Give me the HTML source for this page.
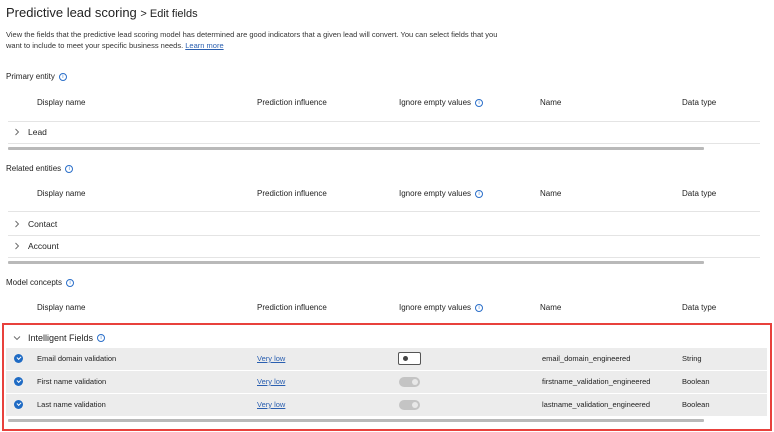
<!DOCTYPE html>
<html><head><style>
body{margin:0;width:774px;height:432px;background:#fff;font-family:"Liberation Sans",sans-serif;color:#222;position:relative;overflow:hidden}
.a{position:absolute;white-space:nowrap;line-height:10px}
.s{font-size:7.5px}
.h{font-size:8px}
.i{position:relative;display:inline-block;width:6px;height:6px;border:1px solid #2b6fc9;border-radius:50%;top:0px;margin-left:4px;font-size:5px;color:#2b6fc9;text-align:center;line-height:6px;vertical-align:top;margin-top:1px}
.ln{position:absolute;left:8px;width:752px;height:1px;background:#e4e4e4}
.sb{position:absolute;left:8px;width:696px;height:3px;background:#b9b9b9;border-radius:1px}
.row{position:absolute;left:6px;width:761px;height:22px;background:#ececec;border-bottom:1px solid #fff}
.ck{position:absolute;left:8px;top:6px;width:9px;height:9px;border-radius:50%;background:#1f6bc4}
.ck:after{content:"";position:absolute;left:2.5px;top:2px;width:3px;height:2px;border-left:1.3px solid #fff;border-bottom:1.3px solid #fff;transform:rotate(-45deg)}
.tg{position:absolute;left:393px;top:6px;width:21px;height:10px;border-radius:5px;background:#c4c4c4}
.tg:after{content:"";position:absolute;right:2px;top:2px;width:6px;height:6px;border-radius:50%;background:#e8e8e8}
.lk{color:#2a5fb0;text-decoration:underline}
.cv{position:absolute;left:14px}
</style></head><body>
<div class="a" style="left:6px;top:5px;font-size:13px;line-height:15px;color:#222">Predictive lead scoring <span style="font-size:11px">&gt; Edit fields</span></div>
<div class="a s" style="left:6px;top:29px;color:#333;line-height:11px">View the fields that the predictive lead scoring model has determined are good indicators that a given lead will convert. You can select fields that you<br>want to include to meet your specific business needs. <span class="lk">Learn more</span></div>

<div class="a h" style="left:6px;top:72px">Primary entity<span class="i">i</span></div>
<div class="a h" style="left:37px;top:98px">Display name</div><div class="a h" style="left:257px;top:98px">Prediction influence</div><div class="a h" style="left:399px;top:98px">Ignore empty values<span class="i">i</span></div><div class="a h" style="left:540px;top:98px">Name</div><div class="a h" style="left:682px;top:98px">Data type</div>
<div class="ln" style="top:121px"></div>
<svg class="cv" style="top:128px" width="6" height="8"><path d="M1.5 1L4.5 4L1.5 7" fill="none" stroke="#666" stroke-width="0.9"/></svg><div class="a h" style="left:28px;top:127px;font-size:8.5px">Lead</div>
<div class="ln" style="top:143px"></div>
<div class="sb" style="top:147px"></div>

<div class="a h" style="left:6px;top:164px">Related entities<span class="i">i</span></div>
<div class="a h" style="left:37px;top:189px">Display name</div><div class="a h" style="left:257px;top:189px">Prediction influence</div><div class="a h" style="left:399px;top:189px">Ignore empty values<span class="i">i</span></div><div class="a h" style="left:540px;top:189px">Name</div><div class="a h" style="left:682px;top:189px">Data type</div>
<div class="ln" style="top:211px"></div>
<svg class="cv" style="top:220px" width="6" height="8"><path d="M1.5 1L4.5 4L1.5 7" fill="none" stroke="#666" stroke-width="0.9"/></svg><div class="a h" style="left:28px;top:219px;font-size:8.5px">Contact</div>
<div class="ln" style="top:235px"></div>
<svg class="cv" style="top:242px" width="6" height="8"><path d="M1.5 1L4.5 4L1.5 7" fill="none" stroke="#666" stroke-width="0.9"/></svg><div class="a h" style="left:28px;top:241px;font-size:8.5px">Account</div>
<div class="ln" style="top:257px"></div>
<div class="sb" style="top:261px"></div>

<div class="a h" style="left:6px;top:278px">Model concepts<span class="i">i</span></div>
<div class="a h" style="left:37px;top:303px">Display name</div><div class="a h" style="left:257px;top:303px">Prediction influence</div><div class="a h" style="left:399px;top:303px">Ignore empty values<span class="i">i</span></div><div class="a h" style="left:540px;top:303px">Name</div><div class="a h" style="left:682px;top:303px">Data type</div>

<div style="position:absolute;left:2px;top:323px;width:766px;height:104px;border:2px solid #e8413c"></div>
<svg class="cv" style="top:335px;left:13px" width="8" height="6"><path d="M1 1.5L4 4.5L7 1.5" fill="none" stroke="#666" stroke-width="0.9"/></svg><div class="a" style="left:28px;top:333px;font-size:9px">Intelligent Fields<span class="i">i</span></div>

<div class="row" style="top:348px"><div class="ck"></div><div class="a s" style="left:31px;top:6px">Email domain validation</div><div class="a s lk" style="left:251px;top:6px">Very low</div><div style="position:absolute;left:392px;top:4px;width:21px;height:11px;border:1px solid #555;border-radius:2px;background:#fff"><div style="position:absolute;left:4px;top:3px;width:5px;height:5px;border-radius:50%;background:#444"></div></div><div class="a s" style="left:536px;top:6px">email_domain_engineered</div><div class="a s" style="left:676px;top:6px">String</div></div>
<div class="row" style="top:371px"><div class="ck"></div><div class="a s" style="left:31px;top:6px">First name validation</div><div class="a s lk" style="left:251px;top:6px">Very low</div><div class="tg"></div><div class="a s" style="left:536px;top:6px">firstname_validation_engineered</div><div class="a s" style="left:676px;top:6px">Boolean</div></div>
<div class="row" style="top:394px"><div class="ck"></div><div class="a s" style="left:31px;top:6px">Last name validation</div><div class="a s lk" style="left:251px;top:6px">Very low</div><div class="tg"></div><div class="a s" style="left:536px;top:6px">lastname_validation_engineered</div><div class="a s" style="left:676px;top:6px">Boolean</div></div>
<div class="sb" style="top:419px"></div>
</body></html>
